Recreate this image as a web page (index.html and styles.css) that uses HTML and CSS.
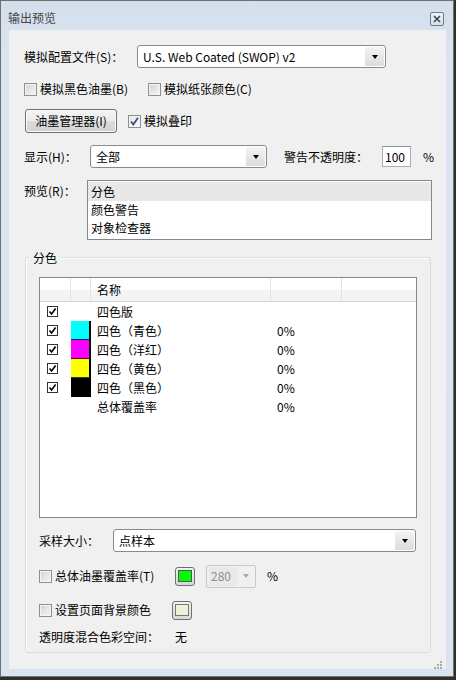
FILE: index.html
```html
<!DOCTYPE html>
<html>
<head>
<meta charset="utf-8">
<link rel="stylesheet" href="styles.css">
</head>
<body>
<div class="window">
  <div class="titlebar">
    <span class="title">输出预览</span>
    <span class="close"><svg width="8" height="8" viewBox="0 0 8 8"><path d="M1 1 L7 7 M7 1 L1 7" stroke="#3d4656" stroke-width="1.6"/></svg></span>
  </div>
  <div class="client">
    <div class="row r1">
      <span class="lbl w113">模拟配置文件(S)：</span>
      <div class="combo w249"><span class="ctext">U.S. Web Coated (SWOP) v2</span><span class="drop"><i class="tri"></i></span></div>
    </div>
    <div class="row r2">
      <span class="cb"></span><span class="cbl">模拟黑色油墨(B)</span>
      <span class="cb cb2"></span><span class="cbl">模拟纸张颜色(C)</span>
    </div>
    <div class="row r3">
      <span class="btn">油墨管理器(I)</span>
      <span class="cb checked"><svg width="11" height="11" viewBox="0 0 11 11"><path d="M2 5.5 L4.3 8.5 L9 1.8" fill="none" stroke="#3c4f86" stroke-width="1.8"/></svg></span><span class="cbl">模拟叠印</span>
    </div>
    <div class="row r4">
      <span class="lbl w66">显示(H)：</span>
      <div class="combo w177"><span class="ctext">全部</span><span class="drop"><i class="tri"></i></span></div>
      <span class="lbl warn">警告不透明度：</span>
      <span class="num">100</span>
      <span class="pct">%</span>
    </div>
    <div class="row r5">
      <span class="lbl w63 top">预览(R)：</span>
      <div class="listbox">
        <div class="li sel">分色</div>
        <div class="li">颜色警告</div>
        <div class="li">对象检查器</div>
      </div>
    </div>
    <div class="group">
      <span class="legend">分色</span>
      <div class="table">
        <div class="thead">
          <span class="th c1"></span><span class="th c2"></span><span class="th c3">名称</span><span class="th c4"></span><span class="th c5"></span>
        </div>
        <div class="tr">
          <span class="td c1"><span class="tcb"><svg width="9" height="9" viewBox="0 0 9 9"><path d="M1.5 4.5 L3.6 7 L7.6 1.5" fill="none" stroke="#000" stroke-width="1.6"/></svg></span></span>
          <span class="td c2"></span><span class="td c3">四色版</span><span class="td c4"></span>
        </div>
        <div class="tr">
          <span class="td c1"><span class="tcb"><svg width="9" height="9" viewBox="0 0 9 9"><path d="M1.5 4.5 L3.6 7 L7.6 1.5" fill="none" stroke="#000" stroke-width="1.6"/></svg></span></span>
          <span class="td c2"><span class="sw cyan"></span></span><span class="td c3">四色（青色）</span><span class="td c4">0%</span>
        </div>
        <div class="tr">
          <span class="td c1"><span class="tcb"><svg width="9" height="9" viewBox="0 0 9 9"><path d="M1.5 4.5 L3.6 7 L7.6 1.5" fill="none" stroke="#000" stroke-width="1.6"/></svg></span></span>
          <span class="td c2"><span class="sw magenta"></span></span><span class="td c3">四色（洋红）</span><span class="td c4">0%</span>
        </div>
        <div class="tr">
          <span class="td c1"><span class="tcb"><svg width="9" height="9" viewBox="0 0 9 9"><path d="M1.5 4.5 L3.6 7 L7.6 1.5" fill="none" stroke="#000" stroke-width="1.6"/></svg></span></span>
          <span class="td c2"><span class="sw yellow"></span></span><span class="td c3">四色（黄色）</span><span class="td c4">0%</span>
        </div>
        <div class="tr">
          <span class="td c1"><span class="tcb"><svg width="9" height="9" viewBox="0 0 9 9"><path d="M1.5 4.5 L3.6 7 L7.6 1.5" fill="none" stroke="#000" stroke-width="1.6"/></svg></span></span>
          <span class="td c2"><span class="sw black"></span></span><span class="td c3">四色（黑色）</span><span class="td c4">0%</span>
        </div>
        <div class="tr">
          <span class="td c1"></span>
          <span class="td c2"></span><span class="td c3">总体覆盖率</span><span class="td c4">0%</span>
        </div>
      </div>
      <div class="row g1">
        <span class="lbl w74">采样大小：</span>
        <div class="combo w303"><span class="ctext">点样本</span><span class="drop"><i class="tri"></i></span></div>
      </div>
      <div class="row g2">
        <span class="cb"></span><span class="cbl w120">总体油墨覆盖率(T)</span>
        <span class="cbtn"><span class="swatch green"></span></span>
        <div class="dcombo"><span class="dtext">280</span><span class="ddrop"><i class="tri grey"></i></span></div>
        <span class="pct2">%</span>
      </div>
      <div class="row g3">
        <span class="cb"></span><span class="cbl w117">设置页面背景颜色</span>
        <span class="cbtn"><span class="swatch beige"></span></span>
      </div>
      <div class="row g4">
        <span class="lbl w136">透明度混合色彩空间：</span>
        <span class="lbl">无</span>
      </div>
    </div>
    <div class="grip"><svg width="8" height="8" viewBox="0 0 8 8"><g fill="#a9a9a9"><rect x="6" y="0" width="2" height="2"/><rect x="3" y="3" width="2" height="2"/><rect x="6" y="3" width="2" height="2"/><rect x="0" y="6" width="2" height="2"/><rect x="3" y="6" width="2" height="2"/><rect x="6" y="6" width="2" height="2"/></g></svg></div>
  </div>
</div>
</body>
</html>
```

FILE: styles.css
```css
* { box-sizing: border-box; }
html, body { margin: 0; padding: 0; }
body {
  width: 456px;
  height: 680px;
  background: #2f2f2f;
  font-family: "Noto Sans CJK SC", "Microsoft YaHei", sans-serif;
  font-size: 12px;
  line-height: 16px;
  color: #000;
  overflow: hidden;
}
.window {
  width: 454px;
  height: 677px;
  border: 1px solid #707070;
  background: linear-gradient(#d4dfec, #dbe5f1 60px, #d9e4f0);
  padding: 0 7px 7px 8px;
  display: flex;
  flex-direction: column;
}
.titlebar {
  height: 29px;
  display: flex;
  align-items: center;
  flex: none;
}
.title {
  color: #444;
  margin-left: -1px;
  margin-top: 4px;
}
.close {
  margin-left: auto;
  margin-right: 2px;
  margin-top: 6px;
  width: 14px;
  height: 14px;
  border: 1px solid #6e7b8e;
  border-radius: 2px;
  background: linear-gradient(#eef2f7, #d5dee9);
  display: flex;
  align-items: center;
  justify-content: center;
}
.client {
  flex: 1;
  background: #f0f0f0;
  padding: 15px 0 0 15px;
  display: flex;
  flex-direction: column;
}
.row { display: flex; align-items: center; flex: none; }
.lbl { white-space: nowrap; flex: none; }
.w113 { width: 113px; }
.w66 { width: 66px; }
.w63 { width: 63px; }
.w74 { width: 74px; }
.w136 { width: 136px; }
.top { align-self: flex-start; margin-top: 3px; }
.r1 { height: 23px; }
.combo {
  height: 23px;
  border: 1px solid #8a8a8a;
  border-radius: 3px;
  background: #fff;
  display: flex;
  align-items: center;
  flex: none;
  box-shadow: inset 0 0 0 1px #fff;
}
.w249 { width: 249px; }
.w177 { width: 177px; }
.w303 { width: 303px; }
.ctext { padding-left: 5px; flex: 1; white-space: nowrap; }
.drop {
  width: 19px;
  height: 19px;
  margin-right: 1px;
  background: linear-gradient(#f4f4f4, #dcdcdc);
  display: flex;
  align-items: center;
  justify-content: center;
  border-radius: 0 2px 2px 0;
}
.tri {
  width: 0;
  height: 0;
  border-left: 3.5px solid transparent;
  border-right: 3.5px solid transparent;
  border-top: 4px solid #000;
}
.tri.grey { border-top-color: #a8a8a8; }
.r2 { margin-top: 13px; height: 16px; }
.cb {
  width: 13px;
  height: 13px;
  border: 1px solid #8e8f8f;
  background: linear-gradient(135deg, #d3d3d3, #f6f6f6);
  box-shadow: inset 0 0 0 1px #f4f4f4;
  flex: none;
  display: flex;
  align-items: center;
  justify-content: center;
}
.cb.checked { background: linear-gradient(135deg, #e4e4e4, #fbfbfb); }
.cbl { margin-left: 3px; white-space: nowrap; flex: none; }
.cb2 { margin-left: 20px; }
.r3 { margin-top: 12px; height: 24px; }
.btn {
  margin-left: 1px;
  width: 92px;
  height: 24px;
  border: 1px solid #707070;
  border-radius: 3px;
  background: linear-gradient(#f3f3f3 0%, #ebebeb 50%, #dcdcdc 51%, #d2d2d2 100%);
  box-shadow: inset 0 0 0 1px #fcfcfc;
  display: flex;
  align-items: center;
  justify-content: center;
  flex: none;
}
.r3 .cb { margin-left: 11px; }
.r4 { margin-top: 12px; height: 23px; }
.warn { margin-left: 17px; width: 98px; }
.num {
  width: 29px;
  height: 21px;
  border: 1px solid #abadb3;
  border-top-color: #8f9297;
  background: #fff;
  padding-left: 2px;
  display: flex;
  align-items: center;
  flex: none;
}
.pct { margin-left: 12px; }
.r5 { margin-top: 12px; align-items: flex-start; }
.listbox {
  width: 345px;
  height: 60px;
  border: 1px solid #828790;
  background: #fff;
  padding: 1px 0 0 0;
}
.li { height: 18px; padding-left: 3px; display: flex; align-items: center; }
.li.sel { background: #e8e8e8; height: 19px; }
.group {
  margin-top: 17px;
  margin-left: 1px;
  width: 406px;
  height: 396px;
  border: 1px solid #d5dfe5;
  border-radius: 3px;
  box-shadow: inset 1px 1px 0 #fff;
  padding: 19px 0 0 13px;
  position: relative;
  display: flex;
  flex-direction: column;
}
.legend {
  position: absolute;
  top: -8px;
  left: 4px;
  padding: 0 3px;
  background: #f0f0f0;
}
.table {
  width: 378px;
  height: 241px;
  border: 1px solid #828790;
  background: #fff;
  flex: none;
}
.thead {
  display: flex;
  height: 24px;
  background: linear-gradient(#ffffff, #ffffff 50%, #f3f4f6 51%, #f1f2f4);
  border-bottom: 1px solid #d5d5d5;
}
.th { border-right: 1px solid #e3e4e6; height: 23px; display: flex; align-items: center; }
.th.c3 { padding-left: 6px; }
.c1 { width: 31px; flex: none; }
.c2 { width: 20px; flex: none; }
.c3 { width: 180px; flex: none; }
.c4 { width: 71px; flex: none; }
.c5 { flex: 1; border-right: none; }
.tr { display: flex; height: 19px; }
.td { display: flex; align-items: center; height: 19px; }
.td.c1 { padding-left: 7px; }
.td.c3 { padding-left: 6px; }
.td.c4 { padding-left: 6px; }
.tcb {
  width: 11px;
  height: 11px;
  border: 1px solid #333;
  background: #fff;
  display: flex;
  align-items: center;
  justify-content: center;
}
.sw { width: 20px; height: 19px; border-right: 2px solid #000; }
.cyan { background: #00ffff; border-bottom: 1px solid #16324a; }
.magenta { background: #ff00ff; border-bottom: 1px solid #3a1a3a; }
.yellow { background: #ffff00; border-bottom: 1px solid #3a3a10; }
.black { background: #000; }
.g1 { margin-top: 11px; height: 23px; }
.g2 { margin-top: 12px; height: 24px; }
.w120 { width: 120px; }
.w117 { width: 117px; }
.cbtn {
  width: 20px;
  height: 19px;
  border: 1px solid #707070;
  border-radius: 3px;
  background: linear-gradient(#f3f3f3, #d8d8d8);
  display: flex;
  align-items: center;
  justify-content: center;
  flex: none;
}
.swatch { width: 14px; height: 12px; border: 1px solid #555; }
.green { background: #00ff00; }
.beige { background: #efefdc; border-color: #777; }
.dcombo {
  margin-left: 11px;
  width: 50px;
  height: 23px;
  border: 1px solid #c9c9c9;
  border-radius: 2px;
  background: #f0f0f0;
  display: flex;
  align-items: center;
  flex: none;
}
.dtext {
  margin-left: 2px;
  width: 28px;
  height: 19px;
  padding-left: 2px;
  background: #e9e9e9;
  color: #8d8d8d;
  display: flex;
  align-items: center;
}
.ddrop { flex: 1; display: flex; justify-content: center; }
.pct2 { margin-left: 11px; }
.g3 { margin-top: 12px; height: 20px; }
.g4 { margin-top: 9px; height: 16px; }
.grip {
  align-self: flex-end;
  margin-top: 3px;
  margin-right: 4px;
  height: 8px;
}
```
